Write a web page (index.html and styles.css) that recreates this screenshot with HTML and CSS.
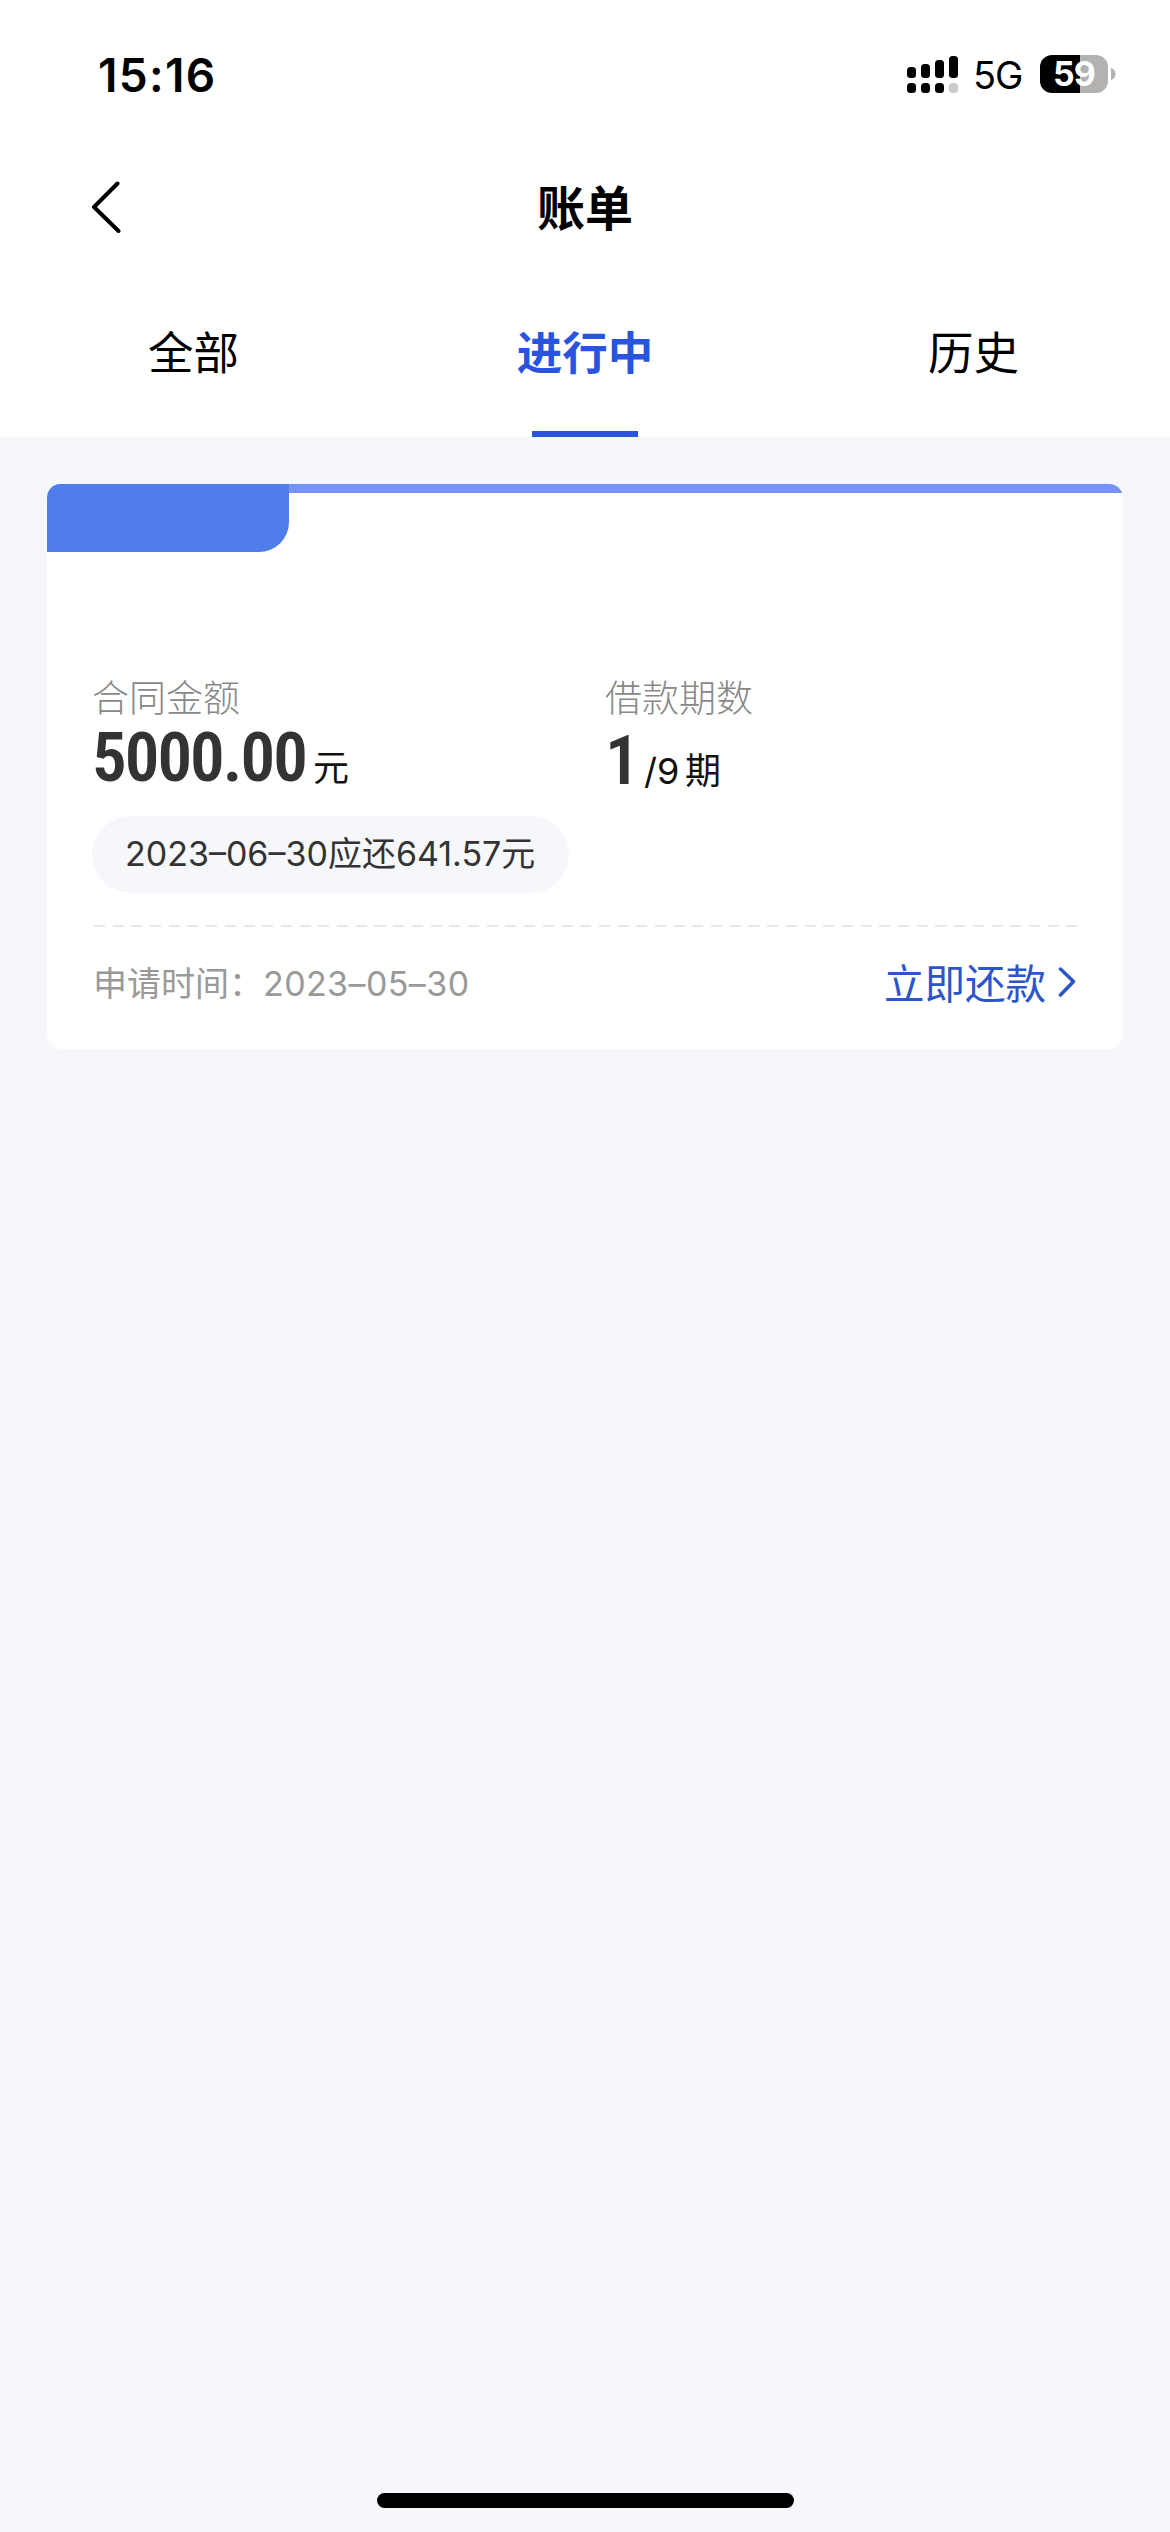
FILE: index.html
```
<!DOCTYPE html>
<html lang="zh-CN">
	<head>
		<meta charset="utf-8" />
		<meta name="viewport" content="width=device-width,initial-scale=1" />
		<title>账单</title>
		<link rel="stylesheet" href="styles.css">
	</head>
	<body>
	<header>
		<div class="status">
			<span class="time">15:16</span>
			<div class="status-right">
				<svg class="signal" width="52" height="38" viewBox="0 0 52 38">
					<rect x="0" y="12" width="9" height="11" rx="3.5"/>
					<rect x="14" y="9" width="9" height="14" rx="3.5"/>
					<rect x="28" y="5" width="9" height="18" rx="3.5"/>
					<rect x="42" y="1" width="9" height="22" rx="3.5"/>
					<rect x="0" y="28" width="9" height="10" rx="3.5"/>
					<rect x="14" y="28" width="9" height="10" rx="3.5"/>
					<rect x="28" y="28" width="9" height="10" rx="3.5"/>
					<rect x="42" y="28" width="9" height="10" rx="3.5" fill="#ccc"/>
				</svg>
				<span class="net">5G</span>
				<div class="battery">59</div>
				<svg width="5" height="12" viewBox="0 0 5 12"><path d="M0 0Q4.500 1.500 4.500 6T0 12Z" fill="#b2b2b2"/></svg>
			</div>
		</div>
		<div class="title">
			<svg class="back" width="30" height="52" viewBox="0 0 30 52"><path d="M26.500 2.500L3 26L27.500 50"/></svg>
			<h1>账单</h1>
		</div>
		<nav>
			<a>全部</a>
			<a class="active">进行中</a>
			<a>历史</a>
		</nav>
	</header>

	<main>
		<section class="card">
			<div class="tag"></div>
			<div class="info">
				<div class="item">
					<p class="label">合同金额</p>
					<p class="value"><b>5000.00</b><span>元</span></p>
				</div>
				<div class="item">
					<p class="label">借款期数</p>
					<p class="value term"><b>1</b><i>/9</i><span>期</span></p>
				</div>
			</div>
			<p class="due">2023–06–30应还641.57元</p>
			<div class="line"></div>
			<div class="bottom">
				<p class="apply">申请时间：<span>2023–05–30</span></p>
				<a class="repay">立即还款<svg width="18" height="30" viewBox="0 0 18 30"><path d="M2.500 2L15.500 14.500L2.500 28"/></svg></a>
			</div>
		</section>
	</main>

	<footer><div class="home"></div></footer>
	</body>
</html>
```
FILE: styles.css
```
*{
	box-sizing: border-box;
	margin: 0;
	padding: 0;
}
body{
	display: flex;
	flex-direction: column;
	height: 2532px;
	background-color: #f5f7fb;
	font-family: Inter, "Noto Sans CJK SC", sans-serif;
	color: #000;
}
header{
	height: 437px;
	background-color: #fff;
}
.status{
	display: flex;
	justify-content: space-between;
	align-items: center;
	height: 148px;
	padding: 0 54px 0 98px;
}
.time{
	padding-top: 1px;
	font-size: 46px;
	font-weight: 600;
	letter-spacing: 1.3px;
}
.status-right{
	display: flex;
	align-items: center;
}
.net{
	width: 51px;
	margin: 1px 0 0 14px;
	font-size: 38px;
	letter-spacing: -1px;
}
.battery{
	width: 68px;
	height: 38px;
	margin: 0 3px 0 16px;
	border-radius: 12px;
	background: linear-gradient(90deg, #000 40px, #b2b2b2 40px);
	color: #fff;
	font-size: 34px;
	font-weight: 700;
	line-height: 38px;
	text-align: center;
	letter-spacing: -1px;
}
.title{
	display: grid;
	grid-template-columns: 93px 1fr 93px;
	align-items: center;
	height: 118px;
}
.back{
	margin-left: 91px;
}
path{
	stroke-linecap: round;
	stroke-linejoin: round;
}
.back path{
	fill: none;
	stroke: #000;
	stroke-width: 4;
}
h1{
	padding-bottom: 5px;
	font-size: 48px;
	font-weight: 700;
	text-align: center;
}
nav{
	display: flex;
	height: 171px;
}
nav a{
	display: flex;
	flex-direction: column;
	align-items: center;
	width: 390px;
	padding: 55px 3px 0 0;
	font-size: 45.5px;
	line-height: 66px;
}
nav .active{
	padding-right: 0;
	color: #2a54dd;
	font-weight: 700;
}
.active::after{
	content: "";
	width: 106px;
	height: 6px;
	margin-top: 44px;
	background-color: #2a54dd;
}
main{
	flex: 1;
	padding: 47px;
}
.card{
	height: 565px;
	border-radius: 14px;
	background: linear-gradient(#7592f6 9px, #fff 9px);
	overflow: hidden;
}
.tag{
	width: 242px;
	height: 68px;
	border-radius: 0 0 30px 0;
	background-color: #4f7de9;
}
.info{
	display: flex;
	height: 264px;
	padding: 119px 0 0 45px;
}
.item{
	width: 513px;
}
.label{
	height: 56px;
	color: #888;
	font-size: 37px;
	font-weight: 300;
	line-height: 56px;
}
.value{
	display: flex;
	align-items: baseline;
	height: 70px;
	color: #111;
	font-size: 36px;
	line-height: 62px;
}
.value b{
	width: 221px;
	color: #333;
	font-family: Roboto;
	font-size: 69px;
	font-weight: 600;
	font-stretch: 75%;
	letter-spacing: -2px;
}
.value i{
	width: 41px;
	font-style: normal;
}
.term{
	padding-top: 3px;
}
.term b{
	width: 39px;
}
.due{
	width: 477px;
	height: 77px;
	margin-left: 45px;
	padding-left: 33px;
	border-radius: 39px;
	background-color: #f5f7fb;
	color: #333;
	font-size: 34px;
	font-weight: 400;
	line-height: 76px;
	white-space: nowrap;
}
.line{
	height: 2px;
	margin: 32px 46px 0 47px;
	background: repeating-linear-gradient(90deg, #e8e8e8 0 11px, #fff 11px 18.7px);
}
.bottom{
	display: flex;
	justify-content: space-between;
	align-items: center;
	height: 114px;
	padding: 0 47px 0 46px;
}
.apply{
	padding-bottom: 6px;
	color: #999;
	font-size: 34px;
	font-weight: 400;
}
.apply span{
	letter-spacing: .4px;
}
.repay{
	display: flex;
	align-items: center;
	gap: 12px;
	padding-bottom: 5px;
	color: #2d55c8;
	font-size: 40.5px;
}
.repay path{
	fill: none;
	stroke: #2d55c8;
	stroke-width: 3.5;
}
footer{
	height: 39px;
}
.home{
	width: 417px;
	height: 15px;
	margin: 0 auto;
	border-radius: 8px;
	background-color: #000;
}
```
